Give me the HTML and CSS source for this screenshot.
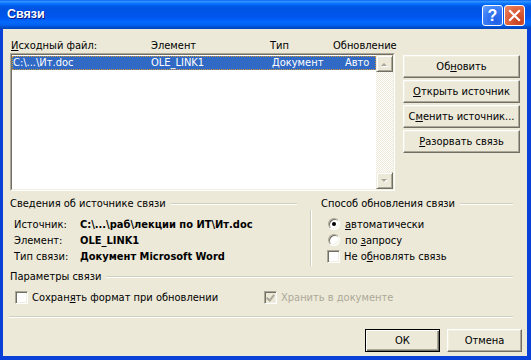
FILE: index.html
```html
<!DOCTYPE html>
<html lang="ru">
<head>
  <meta charset="UTF-8" />
  <title>Связи</title>
  <link rel="stylesheet" href="styles.css">
</head>
<body>

  <div class="window">
    <div class="titlebar">
      <span class="title">Связи</span>
      <div class="title-buttons">
        <span class="tb-btn help">?</span>
        <span class="tb-btn close">
          <svg width="13" height="13" viewBox="0 0 13 13"><path d="M2 2 L11 11 M11 2 L2 11" stroke="#fff" stroke-width="2.2" stroke-linecap="square"/></svg>
        </span>
      </div>
    </div>

    <div class="content">
      <div class="top">
        <div class="links">
          <div class="head">
            <span><u>И</u>сходный файл:</span>
            <span>Элемент</span>
            <span>Тип</span>
            <span>Обновление</span>
          </div>
          <div class="listbox">
            <div class="listbox-inner">
              <div class="rows">
                <div class="row selected">
                  <span>C:\...\Ит.doc</span>
                  <span>OLE_LINK1</span>
                  <span>Документ</span>
                  <span>Авто</span>
                </div>
              </div>
              <div class="vscroll">
                <span class="sb-btn">
                  <svg width="9" height="6" viewBox="0 0 9 6"><path d="M1 5 L4 2 L7 5 Z" fill="#fff" transform="translate(1 1)"/><path d="M1 5 L4 2 L7 5 Z" fill="#ACA899"/></svg>
                </span>
                <span class="sb-track"></span>
                <span class="sb-btn">
                  <svg width="9" height="6" viewBox="0 0 9 6"><path d="M1 1 L4 4 L7 1 Z" fill="#fff" transform="translate(1 1)"/><path d="M1 1 L4 4 L7 1 Z" fill="#ACA899"/></svg>
                </span>
              </div>
            </div>
          </div>
        </div>

        <div class="actions">
          <button class="btn">Об<u>н</u>овить</button>
          <button class="btn"><u>О</u>ткрыть источник</button>
          <button class="btn">С<u>м</u>енить источник...</button>
          <button class="btn"><u>Р</u>азорвать связь</button>
        </div>
      </div>

      <div class="middle">
        <div class="group source">
          <div class="group-title">Сведения об источнике связи</div>
          <div class="info">
            <span>Источник:</span><b>C:\...\раб\лекции по ИТ\Ит.doc</b>
            <span>Элемент:</span><b>OLE_LINK1</b>
            <span>Тип связи:</span><b>Документ Microsoft Word</b>
          </div>
        </div>
        <div class="vsep"></div>
        <div class="group update">
          <div class="group-title">Способ обновления связи</div>
          <div class="options">
            <label class="opt">
              <span class="radio checked"></span><span><u>а</u>втоматически</span>
            </label>
            <label class="opt">
              <span class="radio"></span><span>по <u>з</u>апросу</span>
            </label>
            <label class="opt">
              <span class="check"></span><span>Не о<u>б</u>новлять связь</span>
            </label>
          </div>
        </div>
      </div>

      <div class="group params">
        <div class="group-title">Параметры связи</div>
        <div class="param-row">
          <label class="opt">
            <span class="check"></span><span>Сохран<u>я</u>ть формат при обновлении</span>
          </label>
          <label class="opt disabled">
            <span class="check checked"></span><span>Хранить в документе</span>
          </label>
        </div>
      </div>

      <div class="hsep"></div>

      <div class="footer">
        <button class="btn default">ОК</button>
        <button class="btn">Отмена</button>
      </div>
    </div>
  </div>

</body>
</html>
```

FILE: styles.css
```css
body {
  margin: 0;
  font-family: "DejaVu Sans Condensed", "Liberation Sans", sans-serif;
  font-size: 11px;
  color: #000;
}
u {
  text-decoration: underline;
  text-underline-offset: 1px;
}
.window {
  width: 531px;
  height: 360px;
  display: flex;
  flex-direction: column;
  background: #0840d8;
}
.titlebar {
  height: 29px;
  flex: none;
  display: flex;
  justify-content: space-between;
  align-items: flex-start;
  padding: 0 6px 0 7px;
  background: linear-gradient(to bottom, #0058ee 0%, #3593ff 4%, #288eff 7%, #127dff 10%, #036ffc 14%, #0262ee 18%, #0057e5 24%, #0054e3 30%, #0055eb 56%, #005bf5 66%, #026afe 76%, #0062ef 86%, #0052d6 92%, #0043b8 100%);
}
.title {
  margin-top: 7px;
  color: #fff;
  font-family: "Liberation Sans", sans-serif;
  font-weight: bold;
  font-size: 12.5px;
  text-shadow: 1px 1px #0a1883;
}
.title-buttons {
  display: flex;
  gap: 1px;
  margin-top: 5px;
}
.tb-btn {
  width: 21px;
  height: 21px;
  box-sizing: border-box;
  border: 1px solid #fff;
  border-radius: 3px;
  display: flex;
  align-items: center;
  justify-content: center;
}
.help {
  background: radial-gradient(circle at 70% 80%, #1f5fe8, #3b7cf6 60%, #6fa4ff);
  color: #fff;
  font-family: "Liberation Sans", sans-serif;
  font-weight: bold;
  font-size: 16px;
}
.close {
  background: radial-gradient(circle at 75% 80%, #c7401e, #e0663f 60%, #f08a6a);
}
.content {
  flex: 1;
  margin: 0 4px 4px 3px;
  background: #ece9d8;
  padding: 10px 0 0 7px;
}
.top {
  display: flex;
  gap: 8px;
}
.links {
  width: 385px;
}
.head {
  height: 14px;
  line-height: 14px;
  display: grid;
  grid-template-columns: 140px 119px 63px 1fr;
  padding-left: 1px;
}
.listbox {
  height: 138px;
  box-sizing: border-box;
  border: 1px solid;
  border-color: #aca899 #fff #fff #aca899;
}
.listbox-inner {
  height: 100%;
  box-sizing: border-box;
  border: 1px solid;
  border-color: #716f64 #f1efe2 #f1efe2 #716f64;
  background: #fff;
  display: flex;
}
.rows {
  flex: 1;
  padding-top: 1px;
}
.row {
  height: 14px;
  line-height: 14px;
  display: grid;
  grid-template-columns: 138px 121px 73px 1fr;
  padding-left: 1px;
}
.row.selected {
  background: #316ac5;
  color: #fff;
  outline: 1px dotted #d49a3a;
  outline-offset: -1px;
}
.vscroll {
  width: 17px;
  display: flex;
  flex-direction: column;
}
.sb-btn {
  height: 17px;
  box-sizing: border-box;
  background: #ece9d8;
  border: 1px solid;
  border-color: #f1efe2 #716f64 #716f64 #f1efe2;
  box-shadow: inset 1px 1px #fff, inset -1px -1px #aca899;
  display: flex;
  align-items: center;
  justify-content: center;
}
.sb-track {
  flex: 1;
  background: repeating-conic-gradient(#fff 0 25%, #ece9d8 0 50%) 0 0/2px 2px;
}
.actions {
  width: 117px;
  padding-top: 16px;
  display: flex;
  flex-direction: column;
  gap: 2px;
}
.btn {
  height: 23px;
  box-sizing: border-box;
  font: inherit;
  color: #000;
  background: #ece9d8;
  border: 1px solid;
  border-color: #fff #716f64 #716f64 #fff;
  box-shadow: inset -1px -1px #aca899, inset 1px 1px #f1efe2;
  padding: 0;
  cursor: pointer;
}
.btn.default {
  border: 1px solid #000;
  box-shadow: inset 1px 1px #fff, inset -1px -1px #716f64, inset -2px -2px #aca899;
}
.middle {
  display: flex;
  margin-top: 6px;
}
.group-title {
  height: 13px;
  line-height: 13px;
  display: flex;
  align-items: center;
  white-space: nowrap;
}
.group-title::after {
  content: "";
  flex: 1;
  margin-left: 5px;
  border-top: 1px solid #d0d0bf;
  border-bottom: 1px solid #fff;
}
.source {
  width: 287px;
}
.info {
  display: grid;
  grid-template-columns: 66px auto;
  grid-auto-rows: 16px;
  align-items: center;
  padding: 6px 0 0 4px;
}
.vsep {
  width: 0;
  height: 56px;
  margin: 13px 9px 0 13px;
  border-left: 1px solid #d0d0bf;
  border-right: 1px solid #fff;
}
.update {
  width: 192px;
}
.options {
  padding: 6px 0 0 6px;
}
.opt {
  height: 16px;
  display: flex;
  align-items: center;
  gap: 4px;
}
.check {
  width: 13px;
  height: 13px;
  box-sizing: border-box;
  border: 1px solid;
  border-color: #aca899 #fff #fff #aca899;
  background: #fff;
  box-shadow: inset 1px 1px #716f64, inset -1px -1px #f1efe2;
  position: relative;
}
.check.checked::after {
  content: "";
  position: absolute;
  left: 3px;
  top: 1px;
  width: 3px;
  height: 6px;
  border: solid #aca899;
  border-width: 0 2px 2px 0;
  transform: rotate(40deg);
}
.disabled {
  color: #aca899;
}
.disabled .check {
  background: #ece9d8;
}
.radio {
  width: 12px;
  height: 12px;
  margin: 0 1px 0 1px;
  border-radius: 50%;
  box-sizing: border-box;
  background: #fff;
  border: 1px solid;
  border-color: #aca899 #fff #fff #aca899;
  box-shadow: inset 1px 1px #716f64, inset -1px -1px #f1efe2;
  position: relative;
}
.radio.checked::after {
  content: "";
  position: absolute;
  left: 3px;
  top: 3px;
  width: 4px;
  height: 4px;
  border-radius: 50%;
  background: #000;
}
.params {
  width: 503px;
  margin-top: 4px;
}
.param-row {
  display: grid;
  grid-template-columns: 249px auto;
  padding: 6px 0 0 5px;
}
.hsep {
  width: 504px;
  margin: 11px 0 0 -1px;
  border-top: 1px solid #d0d0bf;
  border-bottom: 1px solid #fff;
}
.footer {
  display: flex;
  justify-content: flex-end;
  gap: 7px;
  margin-top: 11px;
  padding-right: 5px;
}
.footer .btn {
  width: 75px;
}
```
